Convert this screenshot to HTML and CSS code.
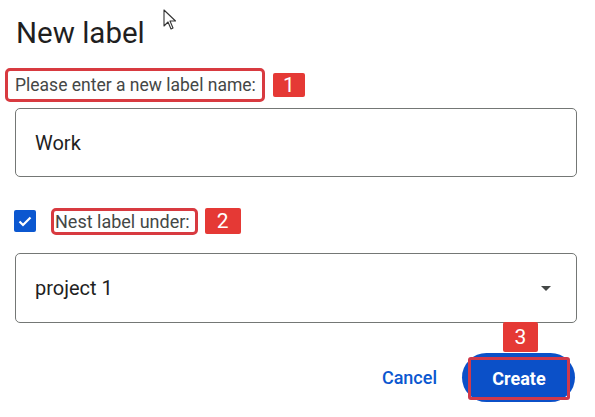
FILE: index.html
```html
<!DOCTYPE html>
<html>
<head>
<meta charset="utf-8">
<link rel="stylesheet" href="styles.css">
</head>
<body>
<div class="dialog">
  <h1 class="title">New label</h1>
  <svg class="cursor" width="14" height="22" viewBox="0 0 14 22"><path d="M1 1 L1 17 L5 13 L8 20 L10 19 L7 12 L12.5 12 Z" fill="#fff" stroke="#333" stroke-width="1.1" stroke-linejoin="round"/></svg>
  <div class="ann-row row1">
    <span class="ann-box">Please enter a new label name:</span>
    <span class="badge">1</span>
  </div>
  <div class="field">Work</div>
  <div class="ann-row row2">
    <span class="checkbox"><svg width="14" height="11" viewBox="0 0 14 11"><path d="M1.5 5.5 L5 9 L12.5 1.5" fill="none" stroke="#fff" stroke-width="2.2"/></svg></span>
    <span class="ann-box box2">Nest label under:</span>
    <span class="badge badge2">2</span>
  </div>
  <div class="field select">
    <span>project 1</span>
    <svg class="arrow" width="10" height="5" viewBox="0 0 10 5"><path d="M0 0 L10 0 L5 5 Z" fill="#444746"/></svg>
  </div>
  <div class="actions">
    <span class="cancel">Cancel</span>
    <div class="create-wrap">
      <span class="badge badge3">3</span>
      <div class="create"><span class="create-inner">Create</span></div>
    </div>
  </div>
</div>
</body>
</html>
```
FILE: styles.css
```css
html, body {
  margin: 0;
  padding: 0;
  background: #fff;
}
body {
  font-family: Roboto, "Liberation Sans", Arial, sans-serif;
  color: #1f1f1f;
}
.dialog {
  position: relative;
  width: 595px;
  height: 417px;
  display: flex;
  flex-direction: column;
}
.title {
  margin: 16px 0 0 16px;
  font-size: 29.5px;
  line-height: 34px;
  font-weight: 400;
  color: #1f1f1f;
}
.cursor {
  position: absolute;
  left: 163px;
  top: 9px;
}
.ann-row {
  display: flex;
  align-items: center;
}
.row1 {
  margin-top: 18px;
  height: 34px;
}
.ann-box {
  box-sizing: border-box;
  height: 34px;
  margin-left: 5px;
  padding: 1px 6px 0 7px;
  border: 3px solid #d83a40;
  border-radius: 5px;
  font-size: 17.5px;
  line-height: 27px;
  color: #444746;
  white-space: nowrap;
}
.badge {
  display: flex;
  align-items: center;
  justify-content: center;
  box-sizing: border-box;
  width: 32px;
  height: 24px;
  margin-left: 8px;
  background: #e53935;
  border-radius: 2px;
  color: #fff;
  font-size: 21px;
  line-height: 24px;
}
.field {
  box-sizing: border-box;
  margin: 6px 0 0 15px;
  width: 562px;
  height: 69px;
  border: 1px solid #747775;
  border-radius: 5px;
  padding: 0 25px 0 19px;
  display: flex;
  align-items: center;
  font-size: 20px;
  color: #1f1f1f;
}
.row2 {
  margin-top: 30px;
  height: 28px;
}
.checkbox {
  box-sizing: border-box;
  width: 22px;
  height: 22px;
  margin-left: 14px;
  background: #0b57d0;
  border-radius: 2px;
  display: flex;
  align-items: center;
  justify-content: center;
}
.box2 {
  height: 27px;
  margin-left: 15px;
  padding: 0 5px 0 1px;
  line-height: 21px;
  font-size: 18px;
}
.badge2 {
  width: 36px;
  height: 26px;
  margin-left: 7px;
}
.select {
  margin-top: 18px;
  height: 70px;
  justify-content: space-between;
}
.actions {
  margin-top: 30px;
  display: flex;
  align-items: center;
  justify-content: flex-end;
  padding-right: 20px;
}
.cancel {
  font-size: 18px;
  font-weight: 500;
  color: #0b57d0;
  margin-right: 25px;
}
.create-wrap {
  position: relative;
}
.badge3 {
  position: absolute;
  left: 41px;
  top: -31px;
  width: 35px;
  height: 30px;
  margin: 0;
}
.create {
  box-sizing: border-box;
  width: 113px;
  height: 49px;
  border-radius: 25px;
  background: #0b50c8;
  padding: 4px 5px 2px 6px;
  display: flex;
}
.create-inner {
  flex: 1;
  border: 3px solid #d0394a;
  border-radius: 3px;
  display: flex;
  align-items: center;
  justify-content: center;
  color: #fff;
  font-size: 18px;
  font-weight: 700;
}
```
